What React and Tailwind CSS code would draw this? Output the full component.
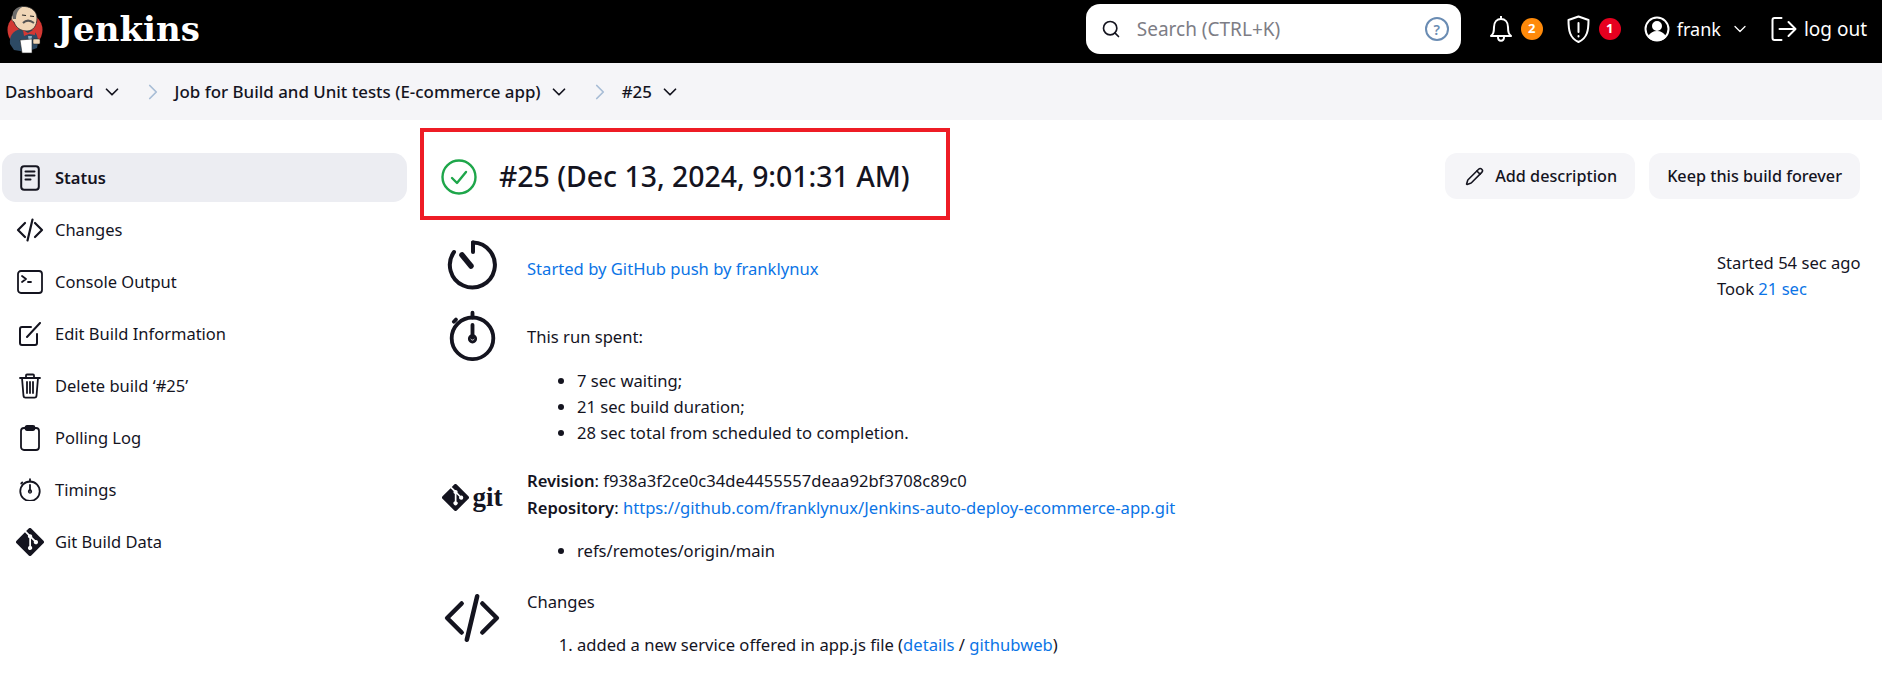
import { ChevronDown, ChevronRight, Search, Pencil } from 'lucide-react'

const font = "font-['Noto_Sans','Open_Sans',sans-serif]"

function JenkinsLogo() {
  return (
    <svg width="38" height="52" viewBox="0 0 38 52">
      <circle cx="19" cy="24" r="17.5" fill="#d33833" />
      <path d="M4 38 C3 30 7 25 14 23 L26 24 C32 27 33 34 31 42 L20 46 L8 44 Z" fill="#2d4a64" />
      <path d="M7 9 C7 3 13 0 19 0.500 C26 1 31 6 31 12 C31 20 27 25 21 25 C15 25 10 22 8 16 C5 15 5 10 7 9 Z" fill="#f0d6b7" stroke="#2b2b2b" strokeWidth="0.8" />
      <path d="M7 13 C5 6 10 1 17 0.500 C12 3 10 8 10 13 Z" fill="#6b6b6b" />
      <path d="M16 9 l4 0.500 M24 10 l4 0.500" stroke="#222" strokeWidth="1.2" />
      <path d="M17 17 C20 14 24 14 28 17" stroke="#555" strokeWidth="2" fill="none" />
      <path d="M17 24 L22 27 L29 23 L29 29 L23 28 L18 30 Z" fill="#d33833" />
      <path d="M22 30 L26 30 L25 36 L23 36 Z" fill="#8fb0c4" />
      <path d="M14 34 L26 33 L26 47 L16 47 Z" fill="#fff" stroke="#222" strokeWidth="0.6" />
      <rect x="27" y="33" width="7" height="5" rx="1" fill="#f0d6b7" stroke="#222" strokeWidth="0.5" />
    </svg>
  )
}

function DocIcon() {
  return (
    <svg width="20" height="26" viewBox="0 0 20 26" fill="none" stroke="#14141f" strokeWidth="2" strokeLinecap="round">
      <rect x="1.2" y="1.2" width="17.6" height="23.6" rx="3" />
      <path d="M5.5 6.5h9M5.5 10.500h9M5.5 14.500h5" />
    </svg>
  )
}

function CodeIcon({ size = 28 }) {
  return (
    <svg width={size} height={size} viewBox="0 0 28 28" fill="none" stroke="#14141f" strokeWidth="2.2" strokeLinecap="round" strokeLinejoin="round">
      <path d="M9 7 2 14l7 7M19 7l7 7-7 7M16.500 3.500 11.500 24.500" />
    </svg>
  )
}

function TerminalIcon() {
  return (
    <svg width="26" height="24" viewBox="0 0 26 24" fill="none" stroke="#14141f" strokeWidth="1.8" strokeLinecap="round" strokeLinejoin="round">
      <rect x="1" y="1" width="24" height="22" rx="3" />
      <path d="M5 6l4 3-4 3M11 12h3" />
    </svg>
  )
}

function EditIcon() {
  return (
    <svg width="24" height="24" viewBox="0 0 24 24" fill="none" stroke="#14141f" strokeWidth="2" strokeLinecap="round" strokeLinejoin="round">
      <path d="M13 5H4a2 2 0 0 0-2 2v14a2 2 0 0 0 2 2h13a2 2 0 0 0 2-2v-9" />
      <path d="M9 15 22 1" />
    </svg>
  )
}

function TrashIcon() {
  return (
    <svg width="22" height="26" viewBox="0 0 22 26" fill="none" stroke="#14141f" strokeWidth="1.8" strokeLinecap="round" strokeLinejoin="round">
      <path d="M1 5h20M7 5V2.500A1 1 0 0 1 8 1.500h6a1 1 0 0 1 1 1V5M3 5l1.500 18a2 2 0 0 0 2 1.700h9a2 2 0 0 0 2-1.700L19 5M8 9v11M11 9v11M14 9v11" />
    </svg>
  )
}

function ClipboardIcon() {
  return (
    <svg width="20" height="26" viewBox="0 0 20 26" fill="none" stroke="#14141f" strokeWidth="1.8" strokeLinejoin="round">
      <rect x="1" y="3" width="18" height="22" rx="3" />
      <rect x="5.500" y="1" width="9" height="4" rx="1.500" />
    </svg>
  )
}

function StopwatchIcon({ size = 22 }) {
  return (
    <svg width={size} height={size * 1.09} viewBox="0 0 44 48" fill="none" stroke="#14141f" strokeWidth="3.6" strokeLinecap="round">
      <circle cx="22" cy="26.500" r="19.500" />
      <path d="M22 7V2.500M6.500 9l-2 2" />
      <path d="M22 14v12" />
      <circle cx="22" cy="27" r="3" strokeWidth="2.6" />
    </svg>
  )
}

function GitDiamond({ size = 28 }) {
  return (
    <svg width={size} height={size} viewBox="0 0 92 92">
      <path
        fill="#14141f"
        d="M90.200 41.900 50.100 1.800a5.900 5.900 0 0 0-8.400 0l-8.300 8.300 10.600 10.600a7 7 0 0 1 8.900 8.900l10.200 10.200a7 7 0 1 1-4.200 4l-9.500-9.500v25a7 7 0 1 1-5.800-.200V33.800a7 7 0 0 1-3.800-9.200L29.400 14.100 1.800 41.700a5.900 5.900 0 0 0 0 8.400l40.100 40.100a5.900 5.900 0 0 0 8.400 0l39.900-39.900a5.900 5.900 0 0 0 0-8.400"
      />
    </svg>
  )
}

function TimerIcon() {
  return (
    <svg width="50" height="50" viewBox="0 0 50 50" fill="none" stroke="#14141f" strokeWidth="4" strokeLinecap="round">
      <path d="M26 2.500A22.500 22.500 0 1 1 7 12" />
      <path d="M26 2.500V12" />
      <path d="M15 15 24 26" strokeWidth="5.500" />
    </svg>
  )
}

const navItems = [
  { label: 'Status', icon: <DocIcon />, active: true },
  { label: 'Changes', icon: <CodeIcon /> },
  { label: 'Console Output', icon: <TerminalIcon /> },
  { label: 'Edit Build Information', icon: <EditIcon /> },
  { label: 'Delete build ‘#25’', icon: <TrashIcon /> },
  { label: 'Polling Log', icon: <ClipboardIcon /> },
  { label: 'Timings', icon: <StopwatchIcon /> },
  { label: 'Git Build Data', icon: <GitDiamond /> },
]

function Header() {
  return (
    <header className="h-[63px] bg-black flex items-center text-white">
      <div className="flex items-center pl-[6px]">
        <JenkinsLogo />
        <span className="ml-[13px] mb-[6px] font-['DejaVu_Serif',serif] font-bold text-[34px] leading-none">Jenkins</span>
      </div>
      <div className="ml-auto flex items-center pb-[5px]">
        <div className="w-[375px] h-[50px] bg-white rounded-[14px] flex items-center pl-[15px] pr-[12px] mr-[28px]">
          <Search size={20} color="#14141f" />
          <span className="ml-[16px] text-[#7d7d85] text-[19px]">Search (CTRL+K)</span>
          <span className="ml-auto w-[24px] h-[24px] rounded-full border-2 border-[#6a8cb3] text-[#6a8cb3] text-[14px] font-semibold flex items-center justify-center">?</span>
        </div>
        <svg width="24" height="28" viewBox="0 0 24 28" fill="none" stroke="#fff" strokeWidth="2" strokeLinejoin="round">
          <path d="M2 21c2-2 3-3 3-9 0-5 3-8 7-8s7 3 7 8c0 6 1 7 3 9z" />
          <path d="M12 1v3M9 22c0 5 6 5 6 0" />
        </svg>
        <span className="ml-[8px] w-[22px] h-[22px] rounded-full bg-[#ff8a0a] text-[13px] font-bold flex items-center justify-center">2</span>
        <svg className="ml-[23px]" width="25" height="28" viewBox="0 0 24 28" fill="none" stroke="#fff" strokeWidth="2" strokeLinecap="round" strokeLinejoin="round">
          <path d="M12 1.500 2 5c0 10 1 18 10 22 9-4 10-12 10-22z" />
          <path d="M12 8v9M12 21v.5" />
        </svg>
        <span className="ml-[8px] w-[22px] h-[22px] rounded-full bg-[#e6001f] text-[13px] font-bold flex items-center justify-center">1</span>
        <svg className="ml-[23px]" width="26" height="26" viewBox="0 0 26 26" fill="none" stroke="#fff" strokeWidth="2">
          <circle cx="13" cy="13" r="11.500" />
          <circle cx="13" cy="10" r="4" fill="#fff" />
          <path d="M5 21c2-4 5-5 8-5s6 1 8 5c-4 4-12 4-16 0z" fill="#fff" />
        </svg>
        <span className="ml-[7px] text-[18px]">frank</span>
        <ChevronDown className="ml-[9px]" size={20} strokeWidth={1.5} />
        <svg className="ml-[20px]" width="27" height="26" viewBox="0 0 26 26" fill="none" stroke="#fff" strokeWidth="2" strokeLinecap="round" strokeLinejoin="round">
          <path d="M11 2H4a2 2 0 0 0-2 2v18a2 2 0 0 0 2 2h7" />
          <path d="M9 13h15M18 6l7 7-7 7" />
        </svg>
        <span className="ml-[7px] mr-[15px] text-[19px]">log out</span>
      </div>
    </header>
  )
}

function Crumb({ children, separator = true }) {
  return (
    <>
      <span>{children}</span>
      <ChevronDown className="ml-[7px]" size={22} strokeWidth={1.9} />
      {separator && <ChevronRight className="ml-[17px] mr-[9px]" size={26} strokeWidth={1.6} color="#a8bdd6" />}
    </>
  )
}

function Breadcrumbs() {
  return (
    <nav className="h-[57px] bg-[#f5f5f8] flex items-center pl-[5px] text-[16.9px] font-medium text-[#14141f]">
      <Crumb>Dashboard</Crumb>
      <Crumb>Job for Build and Unit tests (E-commerce app)</Crumb>
      <Crumb separator={false}>#25</Crumb>
    </nav>
  )
}

function Sidebar() {
  return (
    <aside className="w-[405px] ml-[2px] mt-[33px] shrink-0">
      {navItems.map((item) => (
        <div
          key={item.label}
          className={`h-[49px] mb-[3px] flex items-center rounded-[14px] text-[16.5px] ${item.active ? 'bg-[#ecedf2] font-semibold' : ''}`}
        >
          <span className="w-[53px] flex justify-center pl-[3px]">{item.icon}</span>
          <span className="pt-[2px]">{item.label}</span>
        </div>
      ))}
    </aside>
  )
}

function Row({ icon, className = '', children }) {
  return (
    <div className={`flex ${className}`}>
      <div className="w-[107px] flex justify-center items-start shrink-0 pr-[3px]">{icon}</div>
      <div className="flex-1">{children}</div>
    </div>
  )
}

function Link({ children }) {
  return <span className="text-[#0b74e6]">{children}</span>
}

function Main() {
  return (
    <main className="flex-1 ml-[13px] mr-[22px] text-[16.6px]">
      <div className="mt-[8px] flex items-start justify-between">
        <h1 className="w-[530px] h-[92px] border-[4px] border-[#ee1c25] flex items-center pl-[17px] pt-[5px] text-[28.4px] font-medium">
          <svg width="36" height="36" viewBox="0 0 36 36" fill="none" stroke="#1ea64a" strokeWidth="2.4" strokeLinecap="round" strokeLinejoin="round">
            <circle cx="18" cy="18" r="16.500" />
            <path d="M11 19l5 5 9-11" />
          </svg>
          <span className="ml-[22px]">#25 (Dec 13, 2024, 9:01:31 AM)</span>
        </h1>
        <div className="flex mt-[25px] gap-[14px] text-[16.2px] font-medium">
          <span className="h-[46px] pl-[20px] pr-[18px] bg-[#f5f5f8] rounded-[12px] flex items-center gap-[11px]">
            <Pencil size={19} />
            Add description
          </span>
          <span className="h-[46px] px-[18px] bg-[#f5f5f8] rounded-[12px] flex items-center">Keep this build forever</span>
        </div>
      </div>

      <Row icon={<TimerIcon />} className="mt-[20px] h-[60px]">
        <div className="flex justify-between">
          <div className="mt-[17px]"><Link>Started by GitHub push by franklynux</Link></div>
          <div className="mt-[10px] w-[143px] leading-[26px] whitespace-nowrap">
            <div>Started 54 sec ago</div>
            <div>Took <Link>21 sec</Link></div>
          </div>
        </div>
      </Row>

      <Row icon={<StopwatchIcon size={47} />} className="mt-[10px]">
        <p className="mt-[14px] leading-[26px]">This run spent:</p>
        <ul className="mt-[18px] ml-[50px] list-disc leading-[26px]">
          <li>7 sec waiting;</li>
          <li>21 sec build duration;</li>
          <li>28 sec total from scheduled to completion.</li>
        </ul>
      </Row>

      <Row icon={<div className="flex items-center gap-[4px] mt-[17px]"><GitDiamond size={27} /><span className="font-['Liberation_Serif',serif] font-bold text-[27px] leading-none">git</span></div>} className="mt-[21px]">
        <p className="leading-[27px]"><b className="font-semibold">Revision</b>: f938a3f2ce0c34de4455557deaa92bf3708c89c0</p>
        <p className="leading-[27px]"><b className="font-semibold">Repository</b>: <Link>https://github.com/franklynux/Jenkins-auto-deploy-ecommerce-app.git</Link></p>
        <ul className="mt-[17px] ml-[50px] list-disc leading-[26px]">
          <li>refs/remotes/origin/main</li>
        </ul>
      </Row>

      <Row icon={<CodeIcon size={58} />} className="mt-[25px]">
        <p className="leading-[26px]">Changes</p>
        <ol className="mt-[17px] ml-[50px] list-decimal leading-[26px]">
          <li>added a new service offered in app.js file (<Link>details</Link> / <Link>githubweb</Link>)</li>
        </ol>
      </Row>
    </main>
  )
}

export default function App() {
  return (
    <div className={`${font} w-[1882px] h-[694px] overflow-hidden bg-white text-[#14141f] text-[16.5px]`}>
      <Header />
      <Breadcrumbs />
      <div className="flex">
        <Sidebar />
        <Main />
      </div>
    </div>
  )
}
